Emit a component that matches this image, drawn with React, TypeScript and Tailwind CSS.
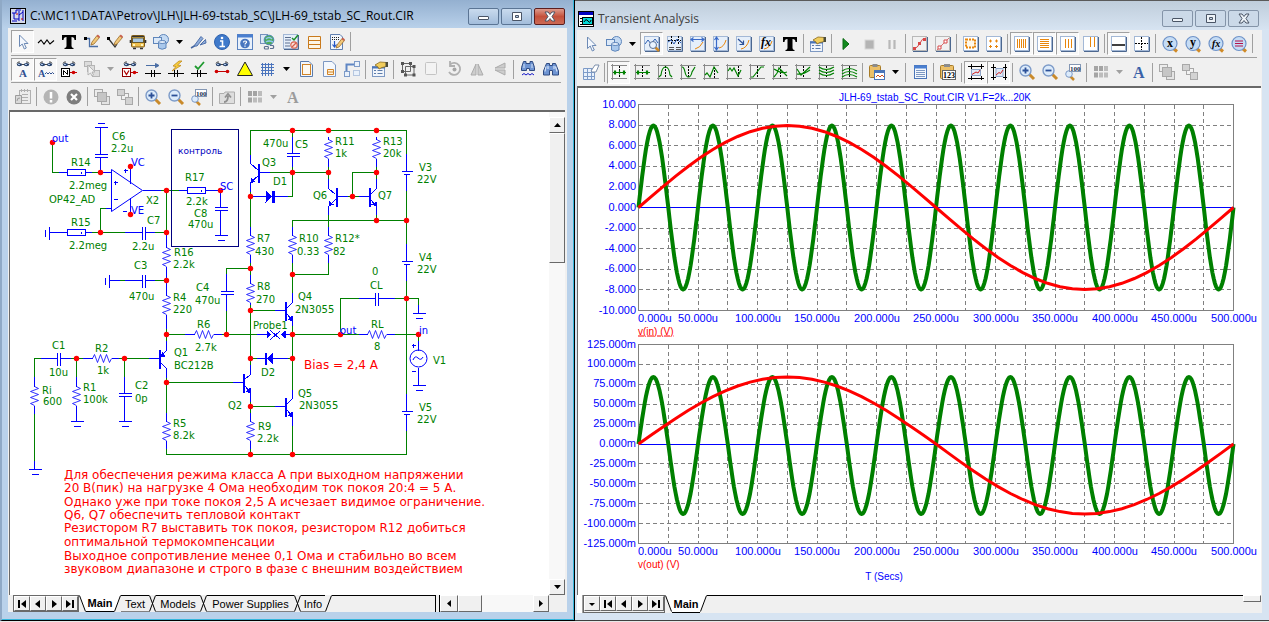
import type { ReactNode } from 'react';

const BLUE = '#0000ff';
const GREEN = '#008000';
const ORANGE = '#e8860c';

/* ---------- small shapes shared by several icons ---------- */

const Page = ({ fill = '#e6effa', stroke = '#a3b8d6' }: { fill?: string; stroke?: string }) => (
  <g>
    <rect x="0.5" y="0.5" width="14" height="14" fill={fill} stroke={stroke} />
    <path d="M1 15.5H15.5V1" fill="none" stroke="#4c678f" />
  </g>
);

const Goggles = () => (
  <g>
    <path d="M2 2.5Q2.5 0.5 5 1M14 2.5Q13.5 0.5 11 1M6 3.5h4" stroke="#444" fill="none" />
    <ellipse cx="4.5" cy="3.6" rx="2.7" ry="1.7" fill="#2c456e" />
    <ellipse cx="11.5" cy="3.6" rx="2.7" ry="1.7" fill="#2c456e" />
    <path d="M3 3.5h2M10 3.5h2" stroke="#a9c3e6" />
  </g>
);

const Pencil = () => (
  <g>
    <path d="M8 8L13 1.5L15.5 3.5L10 10L7 11z" fill="#f1c87a" stroke="#9a6c28" strokeWidth="0.8" />
    <path d="M12.5 2L15 4l1-1.5L13.8 0.5z" fill="#c8604f" />
  </g>
);

const Lens = ({ children }: { children?: ReactNode }) => (
  <g>
    <path d="M10 10L15 15" stroke="#c98a2b" strokeWidth="3" />
    <circle cx="6.5" cy="6.5" r="5.5" fill="#dcebfb" stroke="#7d9bc8" strokeWidth="1.4" />
    {children}
  </g>
);

const BigLens = ({ children }: { children?: ReactNode }) => (
  <g>
    <path d="M11 12L15 15.5" stroke="#d08a26" strokeWidth="3" />
    <circle cx="8" cy="7.5" r="7" fill="#c5dcf5" stroke="#6f93c8" strokeWidth="1.2" />
    {children}
  </g>
);

const Perf = ({ d, mark = 'M8.5 2V14' }: { d: string; mark?: string }) => (
  <g fill="none">
    <path d="M0 1.5H16M0 14.5H16M1.5 0V16" stroke="#8a8a8a" />
    <path d={mark} stroke="#000" strokeDasharray="2 1" />
    <path d={d} stroke={GREEN} strokeWidth="1.2" />
  </g>
);

const serif = { fontFamily: 'Liberation Serif, serif', fontWeight: 700 };

const icons: Record<string, ReactNode> = {
  select: <path d="M4.5 1V12.5L7.2 10L9.3 15L11.3 14L9.2 9.5H13z" fill="#f3f7fd" stroke="#6d8ab5" />,
  wave: <path d="M0 9L3 6L6 10L9 6L12 10L16 6.5" fill="none" stroke="#000" strokeWidth="1.1" />,
  text: <path d="M1 1H15V6H13.5Q13.5 3 10.5 3V12Q10.5 14 12.5 14V15H3.5V14Q5.5 14 5.5 12V3Q2.5 3 2.5 6H1z" fill="#000" />,
  wireOrtho: (
    <g>
      <path d="M1 4.5H5.5V12.5H14" fill="none" stroke="#4a6ea5" strokeWidth="1.3" />
      <rect x="0" y="3" width="3" height="3" fill="#000" />
      <Pencil />
    </g>
  ),
  wireDiag: (
    <g>
      <path d="M1 4L8 13L10 10" fill="none" stroke="#333" strokeWidth="1.3" />
      <rect x="0" y="3" width="3" height="3" fill="#000" />
      <Pencil />
    </g>
  ),
  bus: (
    <g>
      <rect x="1.5" y="1.5" width="13" height="11.5" rx="1" fill="#efbf4c" stroke="#7d5b1c" />
      <path d="M2 2.5H14" stroke="#333" />
      <rect x="2.5" y="4" width="11" height="4.5" fill="#a9c8e4" stroke="#6b5a2b" />
      <path d="M0.5 6v3M15.5 6v3M3 14.5h3M10 14.5h3" stroke="#333" strokeWidth="1.6" />
      <path d="M3 11h2M11 11h2" stroke="#fff5bd" strokeWidth="2" />
    </g>
  ),
  shapes: (
    <g stroke="#5f86bb">
      <circle cx="10.5" cy="5.5" r="5" fill="#c4daf3" />
      <rect x="0.5" y="3.5" width="8" height="6" fill="#dce9f8" />
      <path d="M5.500 8v6q3.500 2.500 7.500 0V8" fill="#a9c8ec" />
      <ellipse cx="9.2" cy="8" rx="3.7" ry="1.5" fill="#e6effa" />
    </g>
  ),
  probe: (
    <g>
      <path d="M0 14L5 11" stroke="#4566a0" strokeWidth="1.5" />
      <path d="M3 12L10 2.5L12 4.5L6 12zM9 11L14.500 5.500L15 9z" fill="#8eaddb" stroke="#4f70aa" />
    </g>
  ),
  info: (
    <g>
      <circle cx="8" cy="8" r="7.5" fill="#3f7acb" stroke="#2f62ae" />
      <path d="M6 7h2.5v5M5.500 12.500h5.500" stroke="#fff" strokeWidth="1.6" fill="none" />
      <circle cx="8" cy="4" r="1.3" fill="#fff" />
    </g>
  ),
  help: (
    <g>
      <rect x="0.5" y="0.5" width="15" height="15" fill="#e9f1fb" stroke="#5c84c0" />
      <path d="M0 2H16" stroke="#4a7fd0" strokeWidth="3" />
      <circle cx="8" cy="9.5" r="4.8" fill="#4775bf" />
      <path d="M6.5 8.5Q6.5 7 8 7Q9.8 7 9.5 8.5Q8 9.5 8 10.5M8 11.5v1.2" fill="none" stroke="#fff" strokeWidth="1.2" />
    </g>
  ),
  globe: (
    <g>
      <rect x="0.5" y="0.5" width="7" height="9" fill="#dce8f6" stroke="#7591bd" />
      <circle cx="9" cy="6" r="4.8" fill="#4fab58" stroke="#4a86b5" />
      <path d="M6 5Q9 2 12 5M6 8Q9 6 13 8" stroke="#8fc7f0" fill="none" strokeWidth="1.5" />
      <path d="M5 12.5h3a2 2 0 0 1 0 2.5h-3a1.5 1.5 0 0 1 0-2.5M10 11.5h3a2 2 0 0 1 0 3h-3" fill="none" stroke="#5c6f90" strokeWidth="1.2" />
    </g>
  ),
  checks: (
    <g>
      <Page />
      <path d="M2 3.5h6M2 6h6M2 9h5M2 12h5" stroke="#5c6f90" />
      <path d="M9 4L11 6L15 1" stroke="#1d8f2b" strokeWidth="1.5" fill="none" />
      <circle cx="11" cy="11" r="3.2" fill="#fbe0da" stroke="#d8604c" strokeWidth="1.2" />
      <path d="M9 13L13 9" stroke="#d8604c" strokeWidth="1.2" />
    </g>
  ),
  rows: <path d="M2.5 2.5H14.5V14.5H2.5zM2.5 6.5H14.5M2.5 10.5H14.5" fill="#fdf6e6" stroke="#c97a1c" />,
  editDoc: (
    <g>
      <path d="M1.5 0.5H11L13.5 3V15.5H1.5z" fill="#f2f6fc" stroke="#5f7fb0" />
      <path d="M3 3.5h7M3 5.5h7" stroke="#222" strokeDasharray="1 1" />
      <path d="M5.5 7v6M3.5 10.5L5.5 13L7.5 10.5" stroke="#2456c4" fill="none" strokeWidth="1.2" />
      <g transform="translate(0 3)"><Pencil /></g>
    </g>
  ),
  viewA: (
    <g>
      <Goggles />
      <text x="4" y="16" fontSize="11" fill="#2f4f90" {...serif}>A</text>
    </g>
  ),
  viewAw: (
    <g>
      <Goggles />
      <text x="0" y="16" fontSize="10" fill="#2f4f90" {...serif}>A</text>
      <path d="M7 13l1.500-1.500l1.500 1.500l1.500-1.500l1.500 1.500l1.500-1.500l1.500 1.500" stroke="#2f4f90" fill="none" />
    </g>
  ),
  viewN: (
    <g>
      <Goggles />
      <rect x="0.5" y="7.5" width="8" height="8" fill="#fff" stroke="#000" />
      <path d="M2.5 14V9.500L6.500 13.500V9" stroke="#000" fill="none" />
      <path d="M9 11.5h7" stroke="#c00000" />
      <circle cx="12.5" cy="11.5" r="1.8" fill="#d00000" />
    </g>
  ),
  groupGray: (
    <g fill="#dcdcdc" stroke="#b4b4b4">
      <rect x="0.5" y="0.5" width="7" height="5" />
      <rect x="3.5" y="4.5" width="7" height="6" />
      <rect x="8.5" y="9.5" width="7" height="6" />
      <path d="M4 4V14L6.5 12L8 15L9.5 14L8 11H11z" fill="#f2f2f2" />
    </g>
  ),
  viewV: (
    <g>
      <Goggles />
      <rect x="0.5" y="7.5" width="8" height="8" fill="#fff" stroke="#900000" />
      <path d="M2 9.5L4.5 13.500L7 9.5" stroke="#b00000" fill="none" strokeWidth="1.2" />
      <path d="M9 11.5h7" stroke="#c00000" />
      <circle cx="12.500" cy="11.5" r="1.8" fill="#d00000" />
    </g>
  ),
  current: (
    <g stroke="#000" fill="#000">
      <path d="M0 12.5H16M6.5 9v7M9.5 9v7" />
      <path d="M1 4.5H12M10.500 2.500L14 4.5L10.500 6.500z" stroke="#4a6ea5" fill="#4a6ea5" />
    </g>
  ),
  power: (
    <g>
      <path d="M0 12.5H16M6.5 9v7M9.5 9v7" stroke="#000" />
      <path d="M11 0L5 5L8 5.5L4 10L13 4.5L9.5 4L14 0z" fill="#f8cf3c" stroke="#c08a20" strokeWidth="0.8" />
    </g>
  ),
  condition: (
    <g>
      <path d="M0 12.5H16M6.5 9v7M9.5 9v7" stroke="#000" />
      <path d="M4 5L7 8L13 1" stroke="#1f9a2f" strokeWidth="1.8" fill="none" />
    </g>
  ),
  pins: (
    <g>
      <Goggles />
      <path d="M2 10.5H14" stroke="#c00000" />
      <circle cx="2.5" cy="10.5" r="1.8" fill="#d00000" />
      <circle cx="13.5" cy="10.5" r="1.8" fill="#d00000" />
    </g>
  ),
  triangle: <path d="M8 1L15.5 14.5H0.5z" fill="#ffff00" stroke="#222" />,
  grid: <path d="M2.5 2V15M5.5 2V15M8.5 2V15M11.5 2V15M1 3.5H14M1 6.5H14M1 9.5H14M1 12.5H14" stroke="#4a74bd" fill="none" />,
  border: (
    <g>
      <path d="M2.5 0.5H11L14.5 4V15.5H2.5z" fill="#f4f8fd" stroke="#5c7cab" />
      <rect x="4.5" y="3.5" width="8" height="10" fill="#fffaf0" stroke="#d08428" />
    </g>
  ),
  titleBlock: (
    <g>
      <path d="M2.5 0.5H11L14.5 4V15.5H2.5z" fill="#f4f8fd" stroke="#7d98c2" />
      <path d="M6.5 8.5H12.500V13.5H6.5zM6.500 11h6" fill="#fff3dc" stroke="#d08428" />
    </g>
  ),
  route: (
    <g fill="#e9f1fb" stroke="#7d9bc8">
      <path d="M2.5 10V3.5H10" fill="none" stroke="#5f86c4" strokeWidth="2" />
      <rect x="10.5" y="0.5" width="5" height="5" />
      <rect x="0.5" y="10.5" width="5" height="5" />
      <rect x="9.5" y="9.5" width="6" height="5" strokeDasharray="1 1" />
    </g>
  ),
  props: (
    <g>
      <rect x="0.5" y="5.5" width="12" height="10" fill="#f1f5fb" stroke="#7d98c2" />
      <path d="M0 6.5H13" stroke="#4a74b8" strokeWidth="2" />
      <path d="M2 9.5h2M5.5 9.5h5M2 12.5h2M5.5 12.5h5" stroke="#5c7cab" />
      <path d="M3 4L8 1L14.5 1.500V5.500L10 6.500L7 8L6 6z" fill="#f0cc5c" stroke="#8a6b1e" strokeWidth="0.8" />
      <rect x="13.5" y="1" width="2.5" height="5" fill="#4c4c38" />
    </g>
  ),
  crop: (
    <g fill="none" stroke="#666">
      <path d="M2.5 2.5H10.500V10.500H2.500zM5.5 5.5H14V14H5.500z" />
      <path d="M1 1h3v3h-3zM9 1h3v3h-3zM1 9h3v3h-3zM12.500 12.500h3v3h-3zM4 12.500h3v3h-3zM12.500 4h3v3h-3z" fill="#555" stroke="none" />
    </g>
  ),
  blank: <rect x="2.5" y="1.5" width="11" height="12" rx="1" fill="#f3f3f3" stroke="#c4c4c4" />,
  rotate: (
    <g fill="none" stroke="#b0b0b0" strokeWidth="1.8">
      <path d="M4 3.5A6 6 0 1 1 3 11M4 0V5H9" />
      <circle cx="8.5" cy="8.5" r="2" fill="#a5a5a5" stroke="none" />
    </g>
  ),
  flipX: <path d="M7 3V14H2zM9 3V14H14z" fill="#cdcdcd" stroke="#ababab" />,
  flipY: <path d="M13 2V7H3zM13 14V9H3z" fill="#cdcdcd" stroke="#ababab" />,
  findWave: (
    <g>
      <path d="M3.500 0.500h2.500v2h4v-2h2.500l2 6v3h-5V7.500h-3v2H1.500v-3z" fill="#6f95d3" stroke="#2f4a80" />
      <path d="M4 3v4M12 3v4" stroke="#d6e4f8" />
      <path d="M2 14l2-1.500l2 1.500l2-1.500l2 1.500l2-1.500l2 1.500" stroke="#1414c8" fill="none" />
    </g>
  ),
  find: (
    <g>
      <path d="M3.500 2.500h3v2h3v-2h3l3 7.500v4H9.500V9.500h-3V14H0.500v-4z" fill="#6f95d3" stroke="#2f4a80" />
      <path d="M3 5.500L2 10.500M12.500 5.500l1.500 5M5 5v3M11 5v3" stroke="#d6e4f8" strokeWidth="1.2" />
    </g>
  ),
  backPage: (
    <g stroke="#b0b0b0" fill="#ececec">
      <rect x="4.5" y="1.5" width="11" height="13" />
      <path d="M7 5.5h6M7 8.5h6M7 11.5h6M6.5 0v3M9.5 0v3M12.5 0v3" />
      <path d="M0.5 6.5h6v8h-6zM2 12Q2 8.5 5 9" fill="#d9d9d9" stroke="#9c9c9c" />
    </g>
  ),
  alert: (
    <g>
      <circle cx="8" cy="8" r="7.5" fill="#b4b4b4" />
      <path d="M8 3v6.5M8 11v2.5" stroke="#fff" strokeWidth="2.5" />
    </g>
  ),
  close: (
    <g>
      <circle cx="8" cy="8" r="7.5" fill="#7d7d7d" />
      <path d="M5 5L11 11M11 5L5 11" stroke="#fff" strokeWidth="2.2" />
    </g>
  ),
  front: (
    <g stroke="#a8a8a8">
      <rect x="0.5" y="0.5" width="8" height="7" fill="#ececec" />
      <rect x="7.5" y="7.5" width="8" height="8" fill="#e4e4e4" />
      <rect x="3.5" y="3.5" width="9" height="9" fill="#c6c6c6" />
    </g>
  ),
  back: (
    <g stroke="#a8a8a8" fill="#d2d2d2">
      <rect x="4.5" y="4.5" width="7" height="6" fill="#f2f2f2" />
      <rect x="0.5" y="0.5" width="7" height="6" />
      <rect x="8.5" y="8.5" width="7" height="7" />
    </g>
  ),
  zoomIn: <Lens><path d="M3.5 6.5h6M6.5 3.5v6" stroke="#2b5098" strokeWidth="1.8" /></Lens>,
  zoomOut: <Lens><path d="M3.5 6.5h6" stroke="#2b5098" strokeWidth="1.8" /></Lens>,
  zoom100: (
    <g>
      <path d="M5 12L9 16" stroke="#c98a2b" strokeWidth="2.5" />
      <circle cx="4" cy="10" r="3.3" fill="#dcebfb" stroke="#7d9bc8" />
      <rect x="4.5" y="0.5" width="11" height="7" fill="#fff" stroke="#8497b4" />
      <text x="5" y="6.5" fontSize="7" fill="#203050" {...serif}>100</text>
    </g>
  ),
  upFolder: (
    <g>
      <path d="M0.5 4.5H5L6 3h9.5V14.5H0.5z" fill="#dedede" stroke="#adadad" />
      <path d="M5 13Q9 13 9 7M6 8.5L9 5L12 8.5" stroke="#909090" strokeWidth="1.8" fill="none" />
    </g>
  ),
  palette: (
    <g fill="#bcbcbc">
      <path d="M1 2h4v5H1zM6 2h4v5H6zM1 8.5h4v5H1z" fill="#a4a4a4" />
      <path d="M11 2h4v5h-4zM6 8.5h4v5H6zM11 8.5h4v5h-4z" />
    </g>
  ),
  fontGray: <text x="2" y="14" fontSize="16" fill="#9c9c9c" {...serif}>A</text>,
  fontBlue: <text x="2" y="14" fontSize="16" fill="#3a62a8" {...serif}>A</text>,
  scopeZoom: (
    <g>
      <Page />
      <path d="M1 8L4 4L7 8L11 3L14 7" stroke="#2f5fb3" fill="none" />
      <path d="M11 11L15 15" stroke="#d08a26" strokeWidth="2.5" />
      <circle cx="9" cy="9" r="3.500" fill="#eaf4ff" stroke="#5a7299" />
    </g>
  ),
  cursorMode: (
    <g>
      <Page />
      <path d="M1 4.5H14M4.5 0V9M11.5 0V9" stroke="#000" strokeDasharray="2 1" />
      <path d="M1 6L4 4L7 8L10 3L14 7" stroke="#2f5fb3" fill="none" />
      <path d="M2 11.5h5M2 13.5h5M9 11.5h5M9 13.5h5" stroke="#555" />
    </g>
  ),
  tagX: (
    <g>
      <Page />
      <path d="M5 13Q10 12 13 6" stroke={ORANGE} fill="none" />
      <path d="M1 3.5H14M3.500 1.500L1 3.5L3.500 5.500M11.500 1.500L14 3.5L11.500 5.500" stroke="#3a6ac8" fill="none" strokeWidth="1.2" />
    </g>
  ),
  tagY: (
    <g>
      <Page />
      <path d="M6 12Q11 11 13 4" stroke={ORANGE} fill="none" />
      <path d="M3.500 1V14M1.500 4L3.500 1L5.500 4M1.500 11L3.500 14L5.500 11" stroke="#3a6ac8" fill="none" strokeWidth="1.2" />
    </g>
  ),
  tagPoint: (
    <g>
      <Page />
      <path d="M5 13Q11 12 13 4" stroke={ORANGE} fill="none" />
      <path d="M2 3L7.500 8M7.500 4.500V8.500H3.500" stroke="#2b5098" fill="none" strokeWidth="1.2" />
    </g>
  ),
  fx: (
    <g>
      <Page />
      <path d="M5 13Q11 12 13 5" stroke={ORANGE} fill="none" />
      <text x="2" y="10" fontSize="12" fontStyle="italic" fill="#000" {...serif}>fx</text>
    </g>
  ),
  run: <path d="M5 2.5L11 8L5 13.500z" fill="#128a1e" stroke="#0c6a14" />,
  stop: <rect x="4" y="4" width="9" height="9" fill="#b4b4b4" stroke="#d8d8d8" />,
  pause: <path d="M5.5 4v9M10.5 4v9" stroke="#b8b8b8" strokeWidth="2.2" />,
  stepRed: (
    <g>
      <Page fill="#f1f1f1" stroke="#b8b8b8" />
      <path d="M1 13Q6 12 8 7T14 2" stroke="#d84848" fill="none" />
      <path d="M1 11h3v3H1zM6 6h3v3H6zM11 2h3v3h-3z" fill="#d84848" />
    </g>
  ),
  stepOpen: (
    <g>
      <Page fill="#f1f1f1" stroke="#b8b8b8" />
      <path d="M2 14L14 2" stroke="#d87070" />
      <path d="M3 10h3v3H3zM9 4h3v3H9z" fill="#fff" stroke="#d84848" />
    </g>
  ),
  boxSel: <g><Page fill="#fff" /><rect x="3" y="3.5" width="9" height="8" fill="#fff8ea" stroke={ORANGE} strokeWidth="2" strokeDasharray="2 1" /></g>,
  dotGrid: <g><Page fill="#fff" /><path d="M3 5h3M4.5 3.5v3M9 5h3M10.5 3.5v3M3 10.5h3M4.5 9v3M9 10.5h3M10.5 9v3" stroke={ORANGE} /></g>,
  vlines: <g><Page fill="#fff" /><path d="M3.5 3V12M5.5 3V12M7.5 3V12M9.5 3V12M11.5 3V12" stroke={ORANGE} /></g>,
  hlines: <g><Page fill="#fff" /><path d="M3 3.5H12M3 5.5H12M3 7.5H12M3 9.5H12M3 11.5H12" stroke={ORANGE} /></g>,
  vlines3: <g><Page fill="#fff" /><path d="M5.5 3V12M8.5 3V12M11.5 3V12" stroke={ORANGE} /></g>,
  vlines2: <g><Page fill="#fff" /><path d="M7.5 1V11M11.5 1V11" stroke={ORANGE} /></g>,
  baseline: <g><Page fill="#fff" /><path d="M1 9H14" stroke="#000" strokeWidth="1.500" /></g>,
  axes: <g><Page fill="#fff" /><path d="M1 7.5H14M7.5 1V14" stroke="#000" strokeDasharray="2 1" /></g>,
  goX: <BigLens><text x="5" y="11" fontSize="12" {...serif}>x</text></BigLens>,
  goY: <BigLens><text x="5" y="10" fontSize="12" {...serif}>y</text></BigLens>,
  goF: <BigLens><text x="4" y="11" fontSize="10" fontStyle="italic" {...serif}>fx</text></BigLens>,
  goLines: <BigLens><path d="M4 5h8M4 7.5h8M4 10h8" stroke="#b3124b" strokeWidth="1.2" /></BigLens>,
  eraseTable: (
    <g>
      <path d="M0.5 4.5H11.500V15.5H0.5zM0.5 8.5h11M0.5 12.5h11M4.5 4.5v11M8.5 4.5v11" fill="#e9f1fb" stroke="#7d9bc8" />
      <path d="M8 7L12 1H16L13 8H9z" fill="#fff" stroke="#7d8fab" />
    </g>
  ),
  pNext: <Perf d="M2 8.5H15M3.5 6.500v4M8.500 6.500v4M13.5 6.500v4M4.500 6.500v4M12.500 6.500v4" />,
  pBoth: <Perf d="M2 8.5H16M3.5 6.500v4M13.5 6.500v4M4.5 6.500v4M12.5 6.500v4" />,
  pPeak: <Perf d="M2 13L4 11Q5 3 8.5 3T13 11L15 13" />,
  pValley: <Perf d="M2 3Q4 3 5 8T8.5 13T12 8L15 3" />,
  pHigh: <Perf d="M2 11L4 9L7 13L11 3L15 9" mark="M11.5 3V14" />,
  pLow: <Perf d="M2 7L4 4L6 7L8 4L12 12L15 6" mark="M12.5 2V14" />,
  pInfl: <Perf d="M2 13H4L12 3H15" />,
  pTop: <Perf d="M2 13Q6 9 7 4L15 12M2 5Q9 10 15 8" />,
  pBot: <Perf d="M2 5L6 11L15 3M2 10Q8 11 15 6" />,
  pGlobalLow: <Perf d="M1 3Q8 8 16 3M1 6Q8 11 16 6M1 9Q8 14 16 9" />,
  pGlobalHigh: <Perf d="M1 7Q8 2 16 7M1 10Q8 5 16 10M1 13Q8 8 16 13" />,
  paste: (
    <g>
      <rect x="0.5" y="1.5" width="11" height="12" rx="1" fill="#ecc068" stroke="#a87c28" />
      <rect x="3.5" y="0" width="5" height="3" fill="#8c8c8c" />
      <rect x="5.5" y="6.5" width="10" height="9" fill="#fff" stroke="#4a74b8" />
      <path d="M6 8h9" stroke="#4a74b8" strokeWidth="2" />
      <path d="M7 13l2-2l2 2l2-2l2 2" stroke="#d05020" fill="none" />
    </g>
  ),
  listBlue: (
    <g>
      <rect x="2.5" y="1.5" width="12" height="13" fill="#f4f8fd" stroke="#4a74b8" />
      <path d="M2 3h13" stroke="#4a7fd0" strokeWidth="3" />
      <path d="M4 6.5h9M4 8.5h9M4 10.5h9M4 12.5h9" stroke="#7d98c2" />
    </g>
  ),
  paste123: (
    <g>
      <rect x="0.5" y="1.5" width="13" height="13" rx="1" fill="#ecc068" stroke="#a87c28" />
      <rect x="4" y="0" width="6" height="3" fill="#8c8c8c" />
      <rect x="2.5" y="6.5" width="13" height="9" fill="#fff" stroke="#666" />
      <text x="3" y="14" fontSize="8" {...serif}>123</text>
    </g>
  ),
  alignH: (
    <g>
      <path d="M0 2.5H16M0 14.5H16M3.500 0v5M13.500 0v5M3.500 12v4M13.500 12v4" stroke="#000" />
      <rect x="3.5" y="5.500" width="9" height="6" fill="#dfe8f4" stroke="#8fa6ca" />
      <path d="M4 10.500L8 8L10 9L12 6" stroke="#d02020" fill="none" />
    </g>
  ),
  alignV: (
    <g>
      <path d="M2.5 0V16M14.5 0V16M0 3.500h5M0 13.500h5M12 3.500h4M12 13.500h4" stroke="#000" />
      <rect x="5" y="4.500" width="7" height="8" fill="#dfe8f4" stroke="#8fa6ca" />
      <path d="M5 11L8 8.500L9.500 9.500L12 6" stroke="#d02020" fill="none" />
    </g>
  ),
};

/* ---------- toolbars: '|' is a divider, 'v' a drop arrow, a trailing * means pressed ---------- */

const mainTools = ['select*', 'wave', 'text', 'wireOrtho', 'wireDiag', 'bus', 'shapes', 'v', 'probe', 'info', 'help', 'globe', 'checks', 'rows', 'editDoc', '|'];
const viewTools = ['viewA*', 'viewAw*', 'viewN', 'groupGray', 'v-', 'viewV', 'current', 'power', 'condition', 'pins', 'triangle', 'grid', 'v', 'border', 'titleBlock', 'route', '|', 'props', '|', 'crop', 'blank', 'rotate', 'flipX', 'flipY', '|', 'findWave', 'find'];
const zoomTools = ['backPage', '|', 'alert', 'close', '|', 'front', 'back', '|', 'zoomIn', 'zoomOut', 'zoom100', '|', 'upFolder', '|', 'palette', 'v-', 'fontGray'];
const scopeTools = ['select', 'shapes', 'v', 'scopeZoom*', 'cursorMode', 'tagX', 'tagY', 'tagPoint', 'fx', 'text', '|', 'props', '|', 'run', 'stop', 'pause', '|', 'stepRed', 'stepOpen', '|', 'boxSel', 'dotGrid', '|', 'vlines*', 'hlines*', 'vlines3*', 'vlines2', '|', 'baseline*', 'axes', '|', 'goX', 'goY', 'goF', 'goLines', '|'];
const perfTools = ['eraseTable', '|', 'pNext*', 'pBoth', 'pPeak', 'pValley', 'pHigh', 'pLow', 'pInfl', 'pTop', 'pBot', 'pGlobalLow', 'pGlobalHigh', '|', 'paste', 'v', '|', 'listBlue', '|', 'paste123', '|', 'alignH*', 'alignV*', '|', 'zoomIn', 'zoomOut', 'zoom100', '|', 'palette', 'v-', 'fontBlue', '|', 'front', 'back'];

const Toolbar = ({ tools }: { tools: string[] }) => (
  <div className="flex h-full items-center overflow-hidden">
    {tools.map((tool, i) => {
      if (tool === '|') {
        return <span key={i} className="mx-[2px] h-[19px] w-px shrink-0 bg-[#a0a0a0]" />;
      }
      if (tool[0] === 'v' && tool.length < 3) {
        return (
          <button key={i} aria-label="More" className="flex h-[22px] w-[15px] shrink-0 items-center justify-center">
            <svg width="7" height="4" viewBox="0 0 7 4"><path d="M0 0H7L3.5 4z" fill={tool === 'v' ? '#000' : '#a0a0a0'} /></svg>
          </button>
        );
      }
      const pressed = tool.endsWith('*');
      const name = pressed ? tool.slice(0, -1) : tool;
      return (
        <button
          key={i}
          aria-label={name}
          className={`flex h-[23px] w-[23px] shrink-0 items-center justify-center border ${
            pressed ? 'border-t-[#a0a0a0] border-r-white border-b-white border-l-[#a0a0a0] bg-[#f8f8f8]' : 'border-transparent'
          }`}
        >
          <svg width="16" height="16" viewBox="0 0 16 16" className="shrink-0 overflow-visible">{icons[name]}</svg>
        </button>
      );
    })}
  </div>
);

/* ---------- window chrome ---------- */

const CaptionButtons = ({ active }: { active?: boolean }) => {
  const base = active ? 'border-[#5b7594] bg-linear-to-b from-[#c9dbee] to-[#a3bddb]' : 'border-[#8494a8] bg-[#cbd9e8]';
  const close = active ? 'border-[#5c1f1f] bg-linear-to-b from-[#dc9a8c] via-[#c4503b] to-[#cc6a55]' : base;
  const fill = active ? '#fff' : '#eef3f8';
  const box = 'flex h-[17px] w-[31px] items-center justify-center rounded-xs border';
  return (
    <div className="flex gap-[2px]">
      <button aria-label="Minimize" className={`${box} ${base}`}>
        <svg width="12" height="11" viewBox="0 0 12 11"><rect x="0.5" y="5.5" width="10" height="3" rx="0.5" fill={fill} stroke="#4a5566" /></svg>
      </button>
      <button aria-label="Restore" className={`${box} ${base}`}>
        <svg width="12" height="11" viewBox="0 0 12 11"><path d="M1.5 1.5H10.5V9.5H1.5zM4.5 4.5V6.5H7.5V4.5z" fill={fill} fillRule="evenodd" stroke="#4a5566" /></svg>
      </button>
      <button aria-label="Close" className={`${box} ${close}`}>
        <svg width="12" height="11" viewBox="0 0 12 11"><path d="M1 1H4L6 3.500L8 1H11L8 5.500L11 10H8L6 7.500L4 10H1L4 5.500z" fill={fill} stroke="#4a5566" /></svg>
      </button>
    </div>
  );
};

const navPaths: Record<string, string> = {
  down: 'M2 4H8L5 7z',
  first: 'M1 1h2v8H1zM9 1v8L4 5z',
  prev: 'M7 1v8L2 5z',
  next: 'M3 1v8L8 5z',
  last: 'M1 1v8L6 5zM7 1h2v8H7z',
};

const raised = 'flex shrink-0 items-center justify-center border border-t-white border-r-[#696969] border-b-[#696969] border-l-white bg-[#f0f0f0]';

const NavButtons = ({ names }: { names: string[] }) => (
  <div className="flex shrink-0 border border-[#696969]">
    {names.map((n) => (
      <button key={n} aria-label={n} className={`${raised} h-[15px] w-4`}>
        <svg width="10" height="10" viewBox="0 0 10 10"><path d={navPaths[n]} /></svg>
      </button>
    ))}
  </div>
);

const Edge = ({ left, right }: { left?: string; right?: string }) => (
  <svg width="7" height="17" viewBox="0 0 7 17" className="shrink-0">
    {left && <path d="M0 17L7 0H0z" fill={left} />}
    {right && <path d="M0 0L7 17V0z" fill={right} />}
    {left && <path d="M0.5 16.5L6.5 0.5" stroke="#000" fill="none" />}
    {right && <path d="M0.5 0.5L6.5 16.5" stroke="#000" fill="none" />}
  </svg>
);

const tabText = "font-['Liberation_Sans',sans-serif] text-[11px] leading-4 whitespace-nowrap";
const idleTab = 'border-t border-b border-t-black border-b-[#808080]';

/* ---------- schematic ---------- */

const zigV = (x: number, y: number) => `M${x} ${y}l4 2l-8 3l8 3l-8 3l8 3l-8 3l4 2`;
const zigH = (x: number, y: number) => `M${x} ${y}l2 -4l3 8l3 -8l3 8l3 -8l3 8l2 -4`;
const capH = (x: number, y: number) => `M${x - 6} ${y}h13M${x - 6} ${y + 3}h13`;
const capV = (x: number, y: number) => `M${x} ${y - 6}v13M${x + 3} ${y - 6}v13`;
const ground = (x: number, y: number) => `M${x - 6} ${y}h13M${x - 3} ${y + 5}h7`;
const battery = (y: number) => `M406 ${y - 18}v18M401 ${y}h11M403 ${y + 3}h6M406 ${y + 3}v16`;

const wires = [
  'M52 142V172H58M91 172H100M160 190H178M105 208H100V232M91 232H124M154 232H166V190M119 280H124M154 280H166',
  'M166 328V340M166 334H184M221 334H256M226 334V310M226 273V268H250M166 377V412M166 448V454H406V430M166 382H232',
  'M34 376V358H40M70 358H82M76 358V376M118 358H148M124 358V376M34 413V460',
  'M250 154V130H406V154M292 130V136M292 166V196H287M269 172H328M328 166V178M376 166V178M376 172H352V196M347 196H358M250 191V226',
  'M406 190V244M406 220H292V226M328 214V226M292 262V292M328 262V274H292M376 214V220M250 262V274M406 280V394',
  'M250 304V364M250 310H274M292 325V389M250 358H256M287 358H292M250 401V412M250 406H274M250 448V454M292 425V454',
  'M292 334H358M394 334H418V340M340 334V298H358M394 298H418V304',
].join('');

const parts = [
  // left column
  'M97 123h7M94 127h13M100 127V154M100 157V172', capH(100, 154), 'M58 172H67M67 169H85V175H67zM81 171v2M85 172H91',
  'M100 172H111M142 190H160M111 208H105M130 166V183M130 197V214', 'M113 182h4M115 180v4M113 199h4M123 170h4M125 168v4M122 211h4',
  'M178 190H187M187 187H205V193H187zM201 189v2M205 190H220V207M220 210V235', capH(220, 207), ground(220, 235),
  'M45 229v7M49 226v13M49 232H67M67 229H85V235H67zM81 231v2M85 232H91M124 232H142M145 232H154', capV(142, 232),
  'M166 232V247M166 266V295M166 314V328',
  'M105 277v7M109 274v13M109 280H119M124 280H142M145 280H154', capV(142, 280),
  'M226 273V291M226 294V310', capH(226, 291), 'M184 334H194M213 334H221',
  'M40 358H57M60 358H70', capV(57, 358), 'M82 358H92M111 358H118',
  'M34 376V386M34 405V413M34 460V469', ground(34, 469), 'M76 376V386M76 405V421', ground(76, 421),
  'M124 376V393M124 396V421', capH(124, 393), ground(124, 421), 'M166 412V421M166 440V448',
  // transistor leads
  'M148 358H158M166 340V350L160 356M160 362L166 368V377', 'M269 172H259M250 154V163L258 170M258 175L250 182V191',
  'M328 178V188L335 194M335 199L328 206V214M337 196H347M358 196H369M376 178V188L370 194M370 199L376 206V214',
  'M274 310H285M292 292V302L286 308M286 313L292 320V325M232 382H243M250 364V374L244 379M244 385L250 392V401',
  'M274 406H285M292 389V398L286 404M286 409L292 416V425',
  // middle and right
  'M250 196H265M274 196H287M292 136V153M292 156V166', capH(292, 153),
  'M328 136V139M328 158V166M376 136V139M376 158V166',
  'M250 226V235M250 254V262M292 226V235M292 254V262M328 226V235M328 254V262',
  'M250 274V283M250 302V304M250 412V421M250 440V448',
  'M256 334H270M280 334H292M270 330L280 339M270 339L280 330M256 358H264M272 358H287',
  'M358 298H375M378 298H394', capV(375, 298), 'M418 304V313', ground(418, 313), 'M358 334H367M386 334H394',
  battery(171), battery(261), battery(411), 'M418 340V350M418 367V385', ground(418, 385), 'M411 345h4M413 343v4M411 371h4',
].join('');

const resistors = [
  zigV(166, 247), zigV(166, 295), zigV(34, 386), zigV(76, 386), zigV(166, 421), zigV(328, 139), zigV(376, 139), zigV(250, 235),
  zigV(292, 235), zigV(328, 235), zigV(250, 283), zigV(250, 421), zigH(194, 334), zigH(92, 358), zigH(367, 334),
].join('');

const bars = 'M159 349v19M258 163v19M336 187v19M369 187v19M285 301v19M285 397v19M243 373v19';
const solids =
  'M265 190V202L272 196zM271 190h3v12h-3zM272 352V364L266 358zM264 352h2v12h-2zM160 357l5 -1l-3 -5zM250 183v-6l5 4zM328 206v-6l5 4zM376 206v-5l-5 3zM292 321v-6l-5 4zM250 393v-6l-5 4zM292 417v-6l-5 4zM266 330v8l4 -4zM285 330v8l-5 -4z';

const dots = [
  [52, 142], [100, 172], [130, 166], [130, 214], [166, 190], [220, 190], [100, 232], [166, 232], [166, 280],
  [292, 130], [328, 130], [376, 130], [292, 172], [328, 172], [376, 172], [250, 196], [352, 196], [376, 220], [406, 220],
  [250, 268], [292, 274], [166, 334], [226, 334], [76, 358], [124, 358], [166, 382], [250, 310], [292, 334], [250, 358],
  [292, 358], [250, 406], [250, 454], [292, 454], [340, 334], [418, 334], [406, 298],
];

const labels: [number, number, string][] = [
  [112, 140, 'C6'], [111, 152, '2.2u'], [71, 166, 'R14'], [69, 189, '2.2meg'], [49, 203, 'OP42_AD'], [71, 226, 'R15'],
  [69, 249, '2.2meg'], [146, 204, 'X2'], [147, 224, 'C7'], [132, 250, '2.2u'], [185, 181, 'R17'], [186, 205, '2.2k'],
  [194, 217, 'C8'], [188, 228, '470u'], [174, 256, 'R16'], [173, 268, '2.2k'], [134, 269, 'C3'], [129, 300, '470u'],
  [263, 147, '470u'], [295, 148, 'C5'], [262, 166, 'Q3'], [273, 185, 'D1'], [335, 145, 'R11'], [335, 157, '1k'],
  [383, 145, 'R13'], [383, 157, '20k'], [313, 199, 'Q6'], [378, 199, 'Q7'], [419, 171, 'V3'], [417, 183, '22V'],
  [257, 242, 'R7'], [255, 255, '430'], [299, 242, 'R10'], [297, 255, '0.33'], [335, 242, 'R12*'], [333, 255, '82'],
  [419, 261, 'V4'], [417, 273, '22V'], [257, 290, 'R8'], [256, 303, '270'], [372, 275, '0'], [370, 289, 'CL'],
  [173, 301, 'R4'], [173, 313, '220'], [196, 291, 'C4'], [195, 304, '470u'], [197, 328, 'R6'], [195, 351, '2.7k'],
  [52, 349, 'C1'], [49, 376, '10u'], [95, 352, 'R2'], [97, 374, '1k'], [174, 356, 'Q1'], [174, 369, 'BC212B'],
  [42, 394, 'Ri'], [43, 405, '600'], [83, 391, 'R1'], [83, 403, '100k'], [135, 389, 'C2'], [135, 402, '0p'],
  [173, 427, 'R5'], [173, 439, '8.2k'], [298, 300, 'Q4'], [295, 313, '2N3055'], [253, 329, 'Probe1'], [261, 376, 'D2'],
  [371, 328, 'RL'], [374, 350, '8'], [433, 364, 'V1'], [298, 397, 'Q5'], [299, 409, '2N3055'], [228, 409, 'Q2'],
  [258, 430, 'R9'], [257, 442, '2.2k'], [419, 411, 'V5'], [417, 423, '22V'],
];

const netNames: [number, number, string][] = [
  [52, 142, 'out'], [131, 166, 'VC'], [131, 214, 'VE'], [220, 190, 'SC'], [340, 334, 'out'], [419, 334, 'in'],
];

const notes = [
  'Для обеспечения режима класса А при выходном напряжении',
  '20 В(пик) на нагрузке 4 Ома необходим ток покоя 20:4 = 5 А.',
  'Однако уже при токе покоя 2,5 А исчезает видимое ограничение.',
  'Q6, Q7 обеспечить тепловой контакт',
  'Резистором R7 выставить ток покоя, резистором R12 добиться',
  'оптимальной термокомпенсации',
  'Выходное сопротивление менее 0,1 Ома и стабильно во всем',
  'звуковом диапазоне и строго в фазе с внешним воздействием',
];

const noteY = [479, 492, 506, 519, 532, 546, 560, 573];

const Schematic = () => (
  <svg width="539" height="483" viewBox="10 112 539 483" className="block shrink-0 font-['DejaVu_Sans',sans-serif] text-[10px]">
    <g transform="translate(0.5 0.5)" fill="none">
      <path d={resistors} stroke={BLUE} strokeWidth="0.8" />
      <path d="M111 169V211L142 190z" stroke={BLUE} />
      <g shapeRendering="crispEdges">
        <path d={wires} stroke={GREEN} />
        <path d={parts} stroke={BLUE} />
        <path d={bars} stroke={BLUE} strokeWidth="2" />
        <path d={solids} fill={BLUE} />
        <path d="M171 129H238V246H171z" stroke="#000080" />
      </g>
    </g>
    <circle cx="418.5" cy="358.5" r="8.5" fill="none" stroke={BLUE} />
    <path d="M413 360q2 -5 5 -2t5 -1" fill="none" stroke={BLUE} />
    <g fill="#ff0000">
      {dots.map(([x, y], i) => <circle key={i} cx={x + 0.5} cy={y + 0.5} r="2.7" />)}
    </g>
    <g fill={GREEN}>
      {labels.map(([x, y, s], i) => <text key={i} x={x} y={y}>{s}</text>)}
    </g>
    <g fill={BLUE}>
      {netNames.map(([x, y, s], i) => <text key={i} x={x} y={y}>{s}</text>)}
    </g>
    <text x="178" y="154" className="text-[9px]" fill="#0000c0">контроль</text>
    <g fill="#ff0000" className="text-[12px]">
      <text x="304" y="369">Bias = 2,4 A</text>
      {notes.map((line, i) => <text key={i} x="64" y={noteY[i]}>{line}</text>)}
    </g>
  </svg>
);

/* ---------- transient plots ---------- */

const PLOT_X = 638.5;
const PLOT_W = 595;

const sine = (zero: number, up: number, down: number, cycles: number) => {
  const pts: string[] = [];
  const steps = cycles * 48;
  for (let i = 0; i <= steps; i++) {
    const s = Math.sin((i / steps) * cycles * 2 * Math.PI);
    pts.push(`${(PLOT_X + (PLOT_W * i) / steps).toFixed(1)},${(zero - s * (s > 0 ? up : down)).toFixed(1)}`);
  }
  return pts.join(' ');
};

interface PlotProps {
  top: number;
  height: number;
  up: number;
  down: number;
  yLabels: string[];
  trace: string;
  underline?: boolean;
}

const xLabels = Array.from({ length: 11 }, (_, i) => `${i * 50}.000u`);

const Plot = ({ top, height, up, down, yLabels, trace, underline }: PlotProps) => {
  const step = height / 10;
  const bottom = top + height;
  const zero = top + height / 2;
  const right = PLOT_X + PLOT_W;
  const zeroLine = Math.floor(zero) + 0.5;
  return (
    <g>
      <g stroke="#808080" fill="none" shapeRendering="crispEdges">
        {Array.from({ length: 19 }, (_, i) => {
          const x = Math.floor(PLOT_X + ((i + 1) * PLOT_W) / 20) + 0.5;
          return <line key={i} x1={x} x2={x} y1={top} y2={bottom} strokeDasharray="4 3" />;
        })}
        {Array.from({ length: 9 }, (_, i) => {
          const y = Math.floor(top + (i + 1) * step) + 0.5;
          return <line key={i} x1={PLOT_X} x2={right} y1={y} y2={y} strokeDasharray="4 3" />;
        })}
        <rect x={PLOT_X} y={top} width={PLOT_W} height={height} />
      </g>
      <path d={`M${PLOT_X} ${zeroLine}H${right}`} stroke="#0000ff" shapeRendering="crispEdges" />
      <polyline points={sine(zero, up, down, 10)} fill="none" stroke={GREEN} strokeWidth="4" strokeLinejoin="round" />
      <polyline points={sine(zero, up, down, 1)} fill="none" stroke="#ff0000" strokeWidth="3" />
      <g fill="#0000ff">
        {yLabels.map((s, i) => <text key={s} x="636" y={Math.round(top + i * step) + 3} textAnchor="end">{s}</text>)}
        {xLabels.map((s, i) => (
          <text key={s} x={i === 0 ? 638 : Math.round(PLOT_X + (i * PLOT_W) / 10)} y={bottom + 11} textAnchor={i === 0 ? 'start' : 'middle'}>{s}</text>
        ))}
      </g>
      <text x="638" y={bottom + 24} className="text-[10px]" fill="#ff0000" textDecoration={underline ? 'underline' : 'none'}>{trace}</text>
    </g>
  );
};

const Plots = () => (
  <svg viewBox="578 88 683 506" preserveAspectRatio="xMinYMin meet" className="block h-full w-full font-['Liberation_Sans',sans-serif] text-[11px]">
    <text x="935" y="101" textAnchor="middle" className="text-[10px]" fill="#0000ff">JLH-69_tstab_SC_Rout.CIR V1.F=2k...20K</text>
    <Plot
      top={104.5}
      height={206}
      up={82}
      down={82}
      underline
      trace="v(in) (V)"
      yLabels={['10.000', '8.000', '6.000', '4.000', '2.000', '0.000', '-2.000', '-4.000', '-6.000', '-8.000', '-10.000']}
    />
    <Plot
      top={344.5}
      height={199}
      up={67}
      down={70}
      trace="v(out) (V)"
      yLabels={['125.000m', '100.000m', '75.000m', '50.000m', '25.000m', '0.000m', '-25.000m', '-50.000m', '-75.000m', '-100.000m', '-125.000m']}
    />
    <text x="884" y="580" textAnchor="middle" className="text-[10px]" fill="#0000ff">T (Secs)</text>
  </svg>
);

/* ---------- windows ---------- */

const SchematicWindow = () => (
  <section className="flex min-w-0 flex-col border-r border-b border-l-2 border-r-black border-b-black border-l-[#8fa9c6] bg-[#b9d1ea]">
    <div className="flex min-h-0 flex-1 flex-col border-r border-b border-[#35b6dc] pr-[6px] pb-[7px] pl-[6px]">
      <header className="-mx-[6px] flex h-7 shrink-0 items-center justify-between bg-linear-to-b from-[#94b0d0] to-[#b9d1ea] pt-1 pr-[8px] pl-2">
        <div className="flex min-w-0 items-center gap-1">
          <svg width="16" height="16" viewBox="0 0 16 16" className="shrink-0">
            <rect x="0.5" y="0.5" width="15" height="15" fill="#d5d9ea" stroke="#000" />
            <path d="M2 5h4v-3h5M4 5v6h5M9 3v10M9 7l4-3v9M2 13h5M12 3h2" stroke="#0000c0" fill="none" />
            <path d="M6 6h2M11 11h2" stroke="#c00000" />
          </svg>
          <h1 className="truncate font-['Open_Sans',sans-serif] text-xs text-black">C:\MC11\DATA\Petrov\JLH\JLH-69-tstab_SC\JLH-69_tstab_SC_Rout.CIR</h1>
        </div>
        <CaptionButtons active />
      </header>

      <div className="flex min-h-0 flex-1 flex-col bg-[#f0f0f0]">
        <div className="ml-[3px] mr-[6px] h-7 shrink-0 border-b border-[#a0a0a0]"><Toolbar tools={mainTools} /></div>
        <div className="ml-[3px] mr-[6px] h-[27px] shrink-0 border-b border-[#a0a0a0]"><Toolbar tools={viewTools} /></div>
        <div className="ml-[3px] mr-[6px] h-[27px] shrink-0"><Toolbar tools={zoomTools} /></div>

        <div className="ml-px mr-[2px] flex min-h-0 flex-1 border-t-2 border-l border-[#696969]">
          <main className="min-w-0 flex-1 overflow-hidden bg-white"><Schematic /></main>
          <div className="flex w-4 shrink-0 flex-col bg-[#f8f8f8] pt-[5px]">
            <button aria-label="Scroll up" className={`${raised} h-4`}><svg width="7" height="4" viewBox="0 0 7 4"><path d="M0 4H7L3.5 0z" /></svg></button>
            <div className="h-[130px] border border-t-white border-r-[#696969] border-b-[#696969] border-l-white bg-[#f0f0f0]" />
            <div className="flex-1" />
            <button aria-label="Scroll down" className={`${raised} h-4`}><svg width="7" height="4" viewBox="0 0 7 4"><path d="M0 0H7L3.5 4z" /></svg></button>
          </div>
        </div>

        <div className="ml-px mr-[2px] flex h-[17px] shrink-0">
          <div className="w-1 bg-[#f0f0f0]" />
          <NavButtons names={['first', 'prev', 'next', 'last']} />
          <Edge right="#fff" />
          <nav className="flex min-w-0">
            <button className={`${tabText} w-7 border-b border-black bg-white text-center font-bold`}>Main</button>
            <Edge left="#fff" />
            <button className={`${tabText} ${idleTab} w-7`}>Text</button>
            <Edge left="#f0f0f0" right="#f0f0f0" />
            <button className={`${tabText} ${idleTab} w-11`}>Models</button>
            <Edge left="#f0f0f0" right="#f0f0f0" />
            <button className={`${tabText} ${idleTab} w-[87px]`}>Power Supplies</button>
            <Edge left="#f0f0f0" right="#f0f0f0" />
            <button className={`${tabText} ${idleTab} w-6`}>Info</button>
            <Edge left="#f0f0f0" />
          </nav>
          <div className="flex-1 border-t border-r border-black" />
          <div className="ml-[3px] flex w-[110px] shrink-0 border-l border-black bg-[#f8f8f8]">
            <button aria-label="Scroll left" className={`${raised} w-[18px]`}><svg width="4" height="7" viewBox="0 0 4 7"><path d="M4 0V7L0 3.5z" /></svg></button>
            <div className="w-6 border border-t-white border-r-[#696969] border-b-[#696969] border-l-white bg-[#f0f0f0]" />
            <div className="flex-1" />
            <button aria-label="Scroll right" className={`${raised} w-4`}><svg width="4" height="7" viewBox="0 0 4 7"><path d="M0 0V7L4 3.5z" /></svg></button>
          </div>
          <div className="w-4 shrink-0" />
        </div>
      </div>
    </div>
  </section>
);

const AnalysisWindow = () => (
  <section className="flex min-w-0 flex-col border-t border-b border-t-[#5a5a5a] border-b-[#404040] bg-[#d7e4f2] pr-[7px] pb-[7px] pl-[2px]">
    <header className="-mr-[7px] -ml-[2px] flex h-[29px] shrink-0 items-center justify-between bg-linear-to-b from-[#bfcddb] to-[#d7e4f2] pt-[6px] pr-[10px] pl-[3px]">
      <div className="flex items-center gap-1">
        <svg width="16" height="16" viewBox="0 0 16 16" className="shrink-0">
          <rect x="0.5" y="0.5" width="15" height="15" fill="#fff" stroke="#000" />
          <path d="M1 2.5H15" stroke="#0000c0" strokeWidth="3" />
          <path d="M2 7.5h2M2 10.5h2M2 13.5h2" stroke="#000" />
          <rect x="4.5" y="6.5" width="10" height="7" fill="#00d8d8" stroke="#000" />
          <path d="M6 11q2-4 4-1t3-1" stroke="#000" fill="none" />
        </svg>
        <h2 className="font-['Open_Sans',sans-serif] text-xs text-[#404040]">Transient Analysis</h2>
      </div>
      <CaptionButtons />
    </header>

    <div className="flex min-h-0 flex-1 flex-col bg-[#f0f0f0]">
      <div className="ml-[2px] mr-[5px] h-7 shrink-0 border-b border-[#a0a0a0]"><Toolbar tools={scopeTools} /></div>
      <div className="ml-[2px] mr-[5px] h-7 shrink-0"><Toolbar tools={perfTools} /></div>
      <main className="mr-px min-h-0 flex-1 border-t-2 border-l border-[#696969] bg-white"><Plots /></main>
      <div className="mr-px flex h-[18px] shrink-0">
        <div className="w-[6px] border-r border-[#a0a0a0] bg-white" />
        <NavButtons names={['down', 'first', 'prev', 'next', 'last']} />
        <Edge right="#fff" />
        <button className={`${tabText} w-7 border-b border-black bg-white font-bold`}>Main</button>
        <Edge left="#fff" />
        <div className="flex-1 border-t border-black" />
        <div className="h-[7px] w-[18px] border border-t-white border-r-[#696969] border-b-[#696969] border-l-white" />
      </div>
    </div>
  </section>
);

const App = () => (
  <div className="grid h-screen grid-cols-[575fr_694fr] overflow-hidden bg-[#e8e8e8] pb-px">
    <SchematicWindow />
    <AnalysisWindow />
  </div>
);

export default App;
